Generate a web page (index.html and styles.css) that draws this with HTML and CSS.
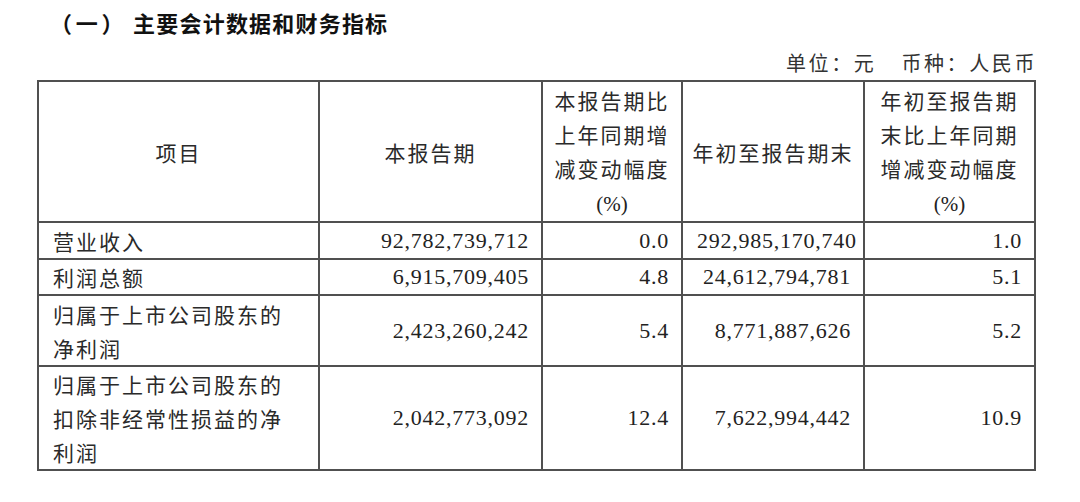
FILE: index.html
```html
<!DOCTYPE html>
<html lang="zh-CN">
<head>
<meta charset="utf-8">
<title>主要会计数据和财务指标</title>
<link rel="stylesheet" href="styles.css">
</head>
<body>
<div class="page">
  <h2 class="title"><span class="title-num">（一）</span><span class="title-text">主要会计数据和财务指标</span></h2>
  <div class="unit"><span>单位：元</span><span class="unit-gap"></span><span>币种：人民币</span></div>
  <table class="fin">
    <colgroup>
      <col class="c1"><col class="c2"><col class="c3"><col class="c4"><col class="c5">
    </colgroup>
    <tr class="head">
      <th>项目</th>
      <th>本报告期</th>
      <th>本报告期比<br>上年同期增<br>减变动幅度<br><span class="num">(%)</span></th>
      <th>年初至报告期末</th>
      <th>年初至报告期<br>末比上年同期<br>增减变动幅度<br><span class="num">(%)</span></th>
    </tr>
    <tr class="r1">
      <td class="label">营业收入</td>
      <td class="num">92,782,739,712</td>
      <td class="num">0.0</td>
      <td class="num">292,985,170,740</td>
      <td class="num">1.0</td>
    </tr>
    <tr class="r2">
      <td class="label">利润总额</td>
      <td class="num">6,915,709,405</td>
      <td class="num">4.8</td>
      <td class="num">24,612,794,781</td>
      <td class="num">5.1</td>
    </tr>
    <tr class="r3">
      <td class="label">归属于上市公司股东的<br>净利润</td>
      <td class="num">2,423,260,242</td>
      <td class="num">5.4</td>
      <td class="num">8,771,887,626</td>
      <td class="num">5.2</td>
    </tr>
    <tr class="r4">
      <td class="label">归属于上市公司股东的<br>扣除非经常性损益的净<br>利润</td>
      <td class="num">2,042,773,092</td>
      <td class="num">12.4</td>
      <td class="num">7,622,994,442</td>
      <td class="num">10.9</td>
    </tr>
  </table>
</div>
</body>
</html>
```

FILE: styles.css
```css
html, body {
  margin: 0;
  padding: 0;
  background: #ffffff;
}

.page {
  width: 1080px;
  height: 502px;
  font-family: "Noto Sans CJK SC", "Liberation Serif", serif;
  color: #2a2a2a;
}

.title {
  margin: 0;
  padding: 8px 0 0 50px;
  height: 32px;
  font-size: 22px;
  line-height: 28px;
  font-weight: 700;
  color: #111;
  letter-spacing: 3.7px;
  display: flex;
}

.title-text {
  margin-left: 6px;
  letter-spacing: 1.2px;
}

.unit {
  display: flex;
  justify-content: flex-end;
  padding-right: 43px;
  margin-top: 8px;
  height: 30px;
  font-size: 20px;
  line-height: 30px;
  letter-spacing: 2.6px;
  color: #333;
}

.unit-gap {
  width: 25px;
}

.fin {
  margin-left: 37px;
  margin-top: 2px;
  width: 997px;
  border-collapse: collapse;
  table-layout: fixed;
  font-size: 21px;
  letter-spacing: 2px;
}

.c1 { width: 281px; }
.c2 { width: 223px; }
.c3 { width: 140px; }
.c4 { width: 182px; }
.c5 { width: 171px; }

.fin th,
.fin td {
  border: 2px solid #505050;
  padding: 0 12px 0 14px;
  line-height: 34px;
  vertical-align: middle;
}

.fin th {
  font-weight: 400;
  text-align: center;
  padding: 0;
}

.fin .label {
  text-align: left;
}

.fin .num {
  font-family: "Liberation Serif", serif;
  font-size: 22px;
  letter-spacing: 0.75px;
  text-align: right;
  color: #222;
}

.fin th .num {
  font-size: 21px;
  letter-spacing: 0;
}

.head { height: 141px; }
.r1 { height: 37px; }
.r2 { height: 34px; }
.r3 { height: 71px; }
.r4 { height: 103px; }
```
